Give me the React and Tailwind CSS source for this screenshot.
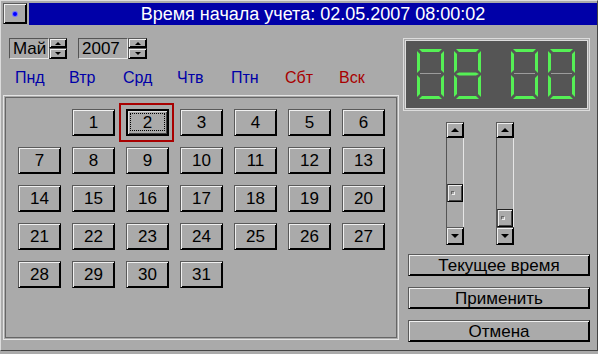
import React from "react";

const RAISED =
  "border border-t-[#5a5a5a] border-l-[#5a5a5a] border-r-black border-b-black shadow-[inset_1px_1px_0_#f0f0f0,inset_-1px_-1px_0_#000]";
const SUNKEN =
  "border border-t-[#555] border-l-[#555] border-r-[#e6e6e6] border-b-[#e6e6e6]";

const Tri = ({ up, w = 6, h = 3 }) => (
  <svg width={w} height={h} viewBox={`0 0 ${w} ${h}`}>
    {up ? (
      <polygon points={`${w / 2},0 ${w},${h} 0,${h}`} fill="#000" />
    ) : (
      <polygon points={`0,0 ${w},0 ${w / 2},${h}`} fill="#000" />
    )}
  </svg>
);

const Spinner = ({ w }) => (
  <div className={`flex flex-col h-[21px] ${w}`}>
    <div className={`h-[10px] bg-[#aaaaaa] ${RAISED} flex items-center justify-center`}>
      <Tri up w={6} h={3} />
    </div>
    <div className={`h-[11px] bg-[#aaaaaa] ${RAISED} flex items-center justify-center`}>
      <Tri w={6} h={3} />
    </div>
  </div>
);

const SEGS = {
  a: "2,0 25,0 22,3 5,3",
  b: "27,2 27,24 24,21 24,5",
  c: "27,26 27,48 24,45 24,29",
  d: "5,47 22,47 25,50 2,50",
  e: "0,26 3,29 3,45 0,48",
  f: "0,2 3,5 3,21 0,24",
  g: "2,25 5,23.5 22,23.5 25,25 22,26.5 5,26.5",
};
const DIGITS = { 0: "abcdef", 8: "abcdefg" };

const Digit = ({ d, x, y }) => (
  <g transform={`translate(${x},${y})`}>
    {!DIGITS[d].includes("g") && (
      <line x1="3" y1="24.5" x2="24" y2="24.5" stroke="#9c9c9c" strokeWidth="1" />
    )}
    {DIGITS[d].split("").map((s) => (
      <polygon key={s} points={SEGS[s]} fill="#55f055" />
    ))}
  </g>
);

const ScrollBar = ({ thumbClass }) => (
  <div className="w-[18px] h-[123px] flex flex-col">
    <div className={`h-[16px] bg-[#aaaaaa] ${RAISED} flex items-center justify-center`}>
      <Tri up w={8} h={4} />
    </div>
    <div className="flex-1 flex flex-col border-l border-l-[#555] border-r border-r-[#e6e6e6]">
      <div
        className={`${thumbClass} h-[18px] w-[16px] bg-[#aaaaaa] border border-t-[#222] border-l-[#555] border-r-black border-b-black shadow-[inset_1px_1px_0_#eee,inset_-1px_-1px_0_#444] flex items-center pl-[3px]`}
      >
        <div className="w-[4px] h-[4px] border border-t-[#666] border-l-[#666] border-r-[#eee] border-b-[#eee]" />
      </div>
    </div>
    <div className={`h-[18px] bg-[#aaaaaa] ${RAISED} flex items-center justify-center`}>
      <Tri w={8} h={4} />
    </div>
  </div>
);

const DayBtn = ({ n }) => {
  if (n === 2) {
    return (
      <div className="relative w-[43px] h-[27px]">
        <div className="absolute left-[-7px] top-[-6px] w-[55px] h-[39px] border-2 border-[#a80000]" />
        <div className="relative w-[43px] h-[27px] bg-[#aaaaaa] border-2 border-black shadow-[inset_1px_1px_0_#ddd,inset_-1px_-1px_0_#444] flex items-center justify-center text-[17px] leading-none text-black">
          <div className="absolute left-[2px] top-[2px] right-[2px] bottom-[3px] border border-dotted border-black" />
          <span className="relative">2</span>
        </div>
      </div>
    );
  }
  return (
    <div
      className={`w-[43px] h-[27px] bg-[#aaaaaa] ${RAISED} flex items-center justify-center text-[17px] leading-none text-black`}
    >
      {n}
    </div>
  );
};

const DAYS = ["Пнд", "Втр", "Срд", "Чтв", "Птн", "Сбт", "Вск"];

export default function App() {
  const cells = [null];
  for (let i = 1; i <= 31; i++) cells.push(i);

  return (
    <div
      className="w-[598px] h-[354px] bg-[#aaaaaa] overflow-hidden"
      style={{ fontFamily: '"Liberation Sans", Arial, sans-serif' }}
    >
      <div className="h-[351px] border-t border-l border-t-[#dcdcdc] border-l-[#dcdcdc] border-r border-b border-r-[#444] border-b-[#444] flex flex-col">
        {/* Title bar */}
        <div className="h-[27px] flex items-start pt-[2px] pl-[2px] gap-[2px]">
          <div className={`w-[24px] h-[21px] bg-[#aaaaaa] ${RAISED} flex items-center justify-center`}>
            <div className="w-[4px] h-[4px] rounded-full bg-[#0000ff] shadow-[0_0_0_1px_#7070ff]" />
          </div>
          <div className="flex-1 h-[22px] bg-[#0000a8] flex items-center justify-center text-white text-[18px] leading-none">
            Время начала учета: 02.05.2007 08:00:02
          </div>
        </div>

        {/* Body */}
        <div className="flex pt-[10px]">
          {/* Left column */}
          <div className="ml-[2px] w-[396px] flex flex-col">
            <div className="flex items-start pl-[6px] h-[21px]">
              <div className={`w-[40px] h-[21px] ${SUNKEN} flex items-center pl-[3px] text-[17px] leading-none text-black`}>
                Май
              </div>
              <Spinner w="w-[18px]" />
              <div className={`ml-[11px] w-[50px] h-[21px] ${SUNKEN} flex items-center pl-[3px] text-[17px] leading-none text-black`}>
                2007
              </div>
              <Spinner w="w-[19px]" />
            </div>

            <div className="mt-[9px] h-[20px] flex items-center pl-[12px]">
              {DAYS.map((d, i) => (
                <div
                  key={d}
                  className={`w-[54px] text-[16px] leading-none ${i >= 5 ? "text-[#a80000]" : "text-[#0000a8]"}`}
                >
                  {d}
                </div>
              ))}
            </div>

            <div className="mt-[7px] h-[245px] border border-[#e4e4e4] p-px">
              <div className="h-full border border-[#666] pl-[12px] pt-[11px]">
                <div className="grid grid-cols-[repeat(7,43px)] auto-rows-[27px] gap-x-[11px] gap-y-[11px]">
                  {cells.map((n, i) =>
                    n === null ? <div key={i} /> : <DayBtn key={i} n={n} />
                  )}
                </div>
              </div>
            </div>
          </div>

          {/* Right column */}
          <div className="ml-[4px] w-[187px] flex flex-col">
            <div className="h-[73px] border border-[#dcdcdc] p-px">
              <div className="h-full border border-[#dcdcdc] bg-[#555555]">
                <svg width="181" height="67" viewBox="0 0 181 67" className="block">
                  <Digit d={0} x={11} y={8} />
                  <Digit d={8} x={48} y={8} />
                  <Digit d={0} x={105} y={8} />
                  <Digit d={0} x={142} y={8} />
                </svg>
              </div>
            </div>

            <div className="mt-[11px] flex pl-[43px] gap-[32px]">
              <ScrollBar thumbClass="mt-[46px]" />
              <ScrollBar thumbClass="mt-auto" />
            </div>

            <div className="mt-[9px] pl-[5px] flex flex-col gap-[11px]">
              {["Текущее время", "Применить", "Отмена"].map((t) => (
                <div
                  key={t}
                  className={`w-[182px] h-[22px] bg-[#aaaaaa] ${RAISED} flex items-center justify-center text-[17px] leading-none text-black`}
                >
                  {t}
                </div>
              ))}
            </div>
          </div>
        </div>
      </div>
    </div>
  );
}
